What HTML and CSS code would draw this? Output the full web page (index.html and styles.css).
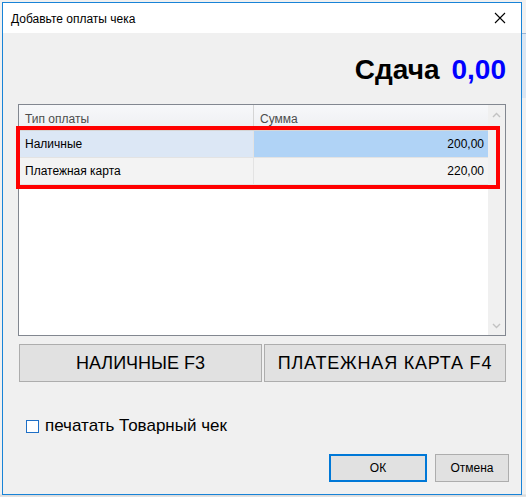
FILE: index.html
```html
<!DOCTYPE html>
<html lang="ru">
<head>
  <meta charset="UTF-8">
  <title>Добавьте оплаты чека</title>
  <link rel="stylesheet" href="styles.css">
</head>
<body>

  <div class="screen">
    <div class="window">
      <div class="titlebar">
        <span class="title">Добавьте оплаты чека</span>
        <span class="close">
          <svg width="12" height="12" viewBox="0 0 12 12"><path d="M1 1L11 11M11 1L1 11" stroke="#000" stroke-width="1.1" fill="none"/></svg>
        </span>
      </div>

      <div class="change">
        <span class="change-label">Сдача</span>
        <span class="change-value">0,00</span>
      </div>

      <div class="grid">
        <div class="table">
          <div class="row head">
            <div class="cell c1">Тип оплаты</div>
            <div class="cell c2">Сумма</div>
          </div>
          <div class="row selected">
            <div class="cell c1">Наличные</div>
            <div class="cell c2 num active">200,00</div>
          </div>
          <div class="row">
            <div class="cell c1">Платежная карта</div>
            <div class="cell c2 num">220,00</div>
          </div>
        </div>
        <div class="scrollbar">
          <svg width="17" height="17" viewBox="0 0 17 17"><path d="M5 10L8.5 6.5L12 10" stroke="#c2c2c2" stroke-width="1.4" fill="none"/></svg>
          <svg width="17" height="17" viewBox="0 0 17 17"><path d="M5 7L8.5 10.5L12 7" stroke="#c2c2c2" stroke-width="1.4" fill="none"/></svg>
        </div>
      </div>

      <div class="pay-buttons">
        <button class="pay w1">НАЛИЧНЫЕ F3</button>
        <button class="pay w2">ПЛАТЕЖНАЯ КАРТА F4</button>
      </div>

      <label class="check-row">
        <span class="checkbox"></span>
        <span>печатать Товарный чек</span>
      </label>

      <div class="dialog-buttons">
        <button class="btn ok">ОК</button>
        <button class="btn cancel">Отмена</button>
      </div>

      <div class="mark"></div>
    </div>
    <div class="behind"></div>
  </div>

</body>
</html>
```

FILE: styles.css
```css
body {
  margin: 0;
  font-family: 'Liberation Sans', Arial, sans-serif;
  background: #f0f0f0;
}

.screen {
  position: relative;
  width: 526px;
  height: 497px;
  overflow: hidden;
  background: linear-gradient(#f0f0f0 494px, #d9d9d9 495px, #e6e6e6);
}

.window {
  position: relative;
  margin: 2px 0 0 2px;
  width: 518px;
  height: 491px;
  border: 1px solid #1883d7;
  background: #f0f0f0;
  color: #000;
}

.titlebar {
  height: 30px;
  background: #fff;
  display: flex;
  align-items: center;
  justify-content: space-between;
  padding: 0 10px 0 8px;
  font-size: 12px;
}

.title { margin-top: 1px; }

.close {
  display: flex;
  width: 12px;
  height: 12px;
  margin-right: 5px;
}

.change {
  box-sizing: border-box;
  height: 71px;
  padding: 21px 15px 0 0;
  display: flex;
  justify-content: flex-end;
  gap: 12px;
  font-size: 28px;
  font-weight: bold;
  line-height: 32px;
}

.change-value { color: #0000ff; }

.grid {
  display: flex;
  margin-left: 15px;
  width: 486px;
  height: 230px;
  border: 1px solid #828790;
  background: #fff;
}

.table {
  flex: 1;
  font-size: 12px;
}

.row {
  display: flex;
  height: 26px;
  border-bottom: 1px solid #e3e3e3;
  background: #f3f3f3;
}

.cell {
  display: flex;
  align-items: center;
  padding: 0 6px;
  box-sizing: border-box;
}

.c1 {
  width: 235px;
  border-right: 1px solid #e3e3e3;
}

.c2 { flex: 1; }

.num {
  justify-content: flex-end;
  padding-right: 4px;
}

.head {
  height: 25px;
  background: linear-gradient(#f7f8fa, #eeeff2);
  border-bottom: 1px solid #d5d5d5;
  color: #4c4c4c;
}

.head .c1 { border-right-color: #d5d5d5; }
.head .cell { padding-top: 2px; }

.selected .c1 { background: #dce7f5; }
.selected .active { background: #b0d3f6; }

.scrollbar {
  width: 17px;
  background: #f0f0f0;
  display: flex;
  flex-direction: column;
  justify-content: space-between;
  padding: 2px 0 1px;
}

.pay-buttons {
  display: flex;
  gap: 2px;
  margin: 8px 0 0 16px;
}

.pay {
  height: 38px;
  border: 1px solid #adadad;
  background: #e1e1e1;
  font-family: inherit;
  font-size: 18px;
  color: #000;
  padding: 0;
}

.w1 { width: 243px; }
.w2 { width: 242px; letter-spacing: 0.8px; }

.check-row {
  display: flex;
  align-items: center;
  gap: 6px;
  margin: 37px 0 0 23px;
  height: 14px;
  font-size: 17px;
}

.checkbox {
  width: 11px;
  height: 11px;
  border: 1px solid #1e6fc6;
  background: #fff;
}

.dialog-buttons {
  display: flex;
  justify-content: flex-end;
  gap: 8px;
  margin-top: 21px;
  padding-right: 12px;
}

.btn {
  height: 28px;
  border: 1px solid #adadad;
  background: #e1e1e1;
  font-family: inherit;
  font-size: 12px;
  color: #000;
  padding: 0;
}

.ok {
  width: 98px;
  border: 2px solid #0078d7;
}

.cancel { width: 74px; }

.mark {
  position: absolute;
  left: 13px;
  top: 123px;
  width: 476px;
  height: 55px;
  border: 4px solid #ff0000;
}

.behind {
  position: absolute;
  left: 522px;
  top: 33px;
  width: 4px;
  height: 64px;
  background: #dbe6f2;
  border-top: 1px solid #9ab7d8;
}
```
